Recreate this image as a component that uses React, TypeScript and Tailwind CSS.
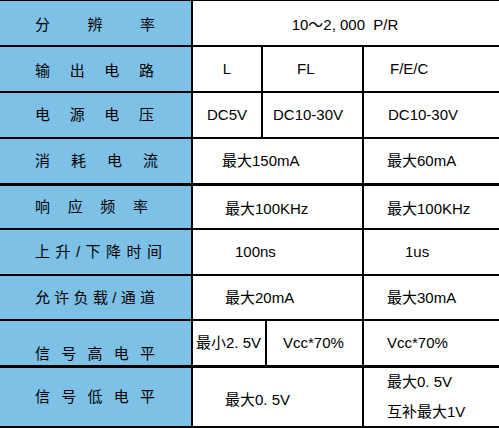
const font = { fontFamily: '"Liberation Sans", "Noto Sans CJK SC", sans-serif' };

const Label = ({ text, width }: { text: string; width: number }) => (
  <div className="flex justify-between" style={{ width }}>
    {Array.from(text).map((c, i) => (
      <span key={i}>{c}</span>
    ))}
  </div>
);

const App = () => {
  return (
    <div
      className="w-[499px] h-[428px] bg-white text-black text-[15px] leading-[20px] overflow-hidden"
      style={font}
    >
      <div className="border-t border-black">
        {/* 分辨率 */}
        <div className="flex h-[46px] border-b-2 border-black">
          <div className="w-[193px] shrink-0 bg-[#7dc1e6] border-r-2 border-black flex items-center pl-[35px] pt-[3px]">
            <Label text="分辨率" width={120} />
          </div>
          <div className="flex-1 flex items-center justify-center pt-[4px] pr-[2px] whitespace-pre">10～2, 000  P/R</div>
        </div>

        {/* 输出电路 */}
        <div className="flex h-[46px] border-b-2 border-black">
          <div className="w-[193px] shrink-0 bg-[#7dc1e6] border-r-2 border-black flex items-center pl-[35px] pt-[3px]">
            <Label text="输出电路" width={119} />
          </div>
          <div className="w-[70px] shrink-0 border-r-2 border-black flex items-center justify-center">L</div>
          <div className="w-[101px] shrink-0 border-r-2 border-black flex items-center pl-[34px]">FL</div>
          <div className="flex-1 flex items-center pl-[26px]">F/E/C</div>
        </div>

        {/* 电源电压 */}
        <div className="flex h-[46px] border-b-2 border-black">
          <div className="w-[193px] shrink-0 bg-[#7dc1e6] border-r-2 border-black flex items-center pl-[35px]">
            <Label text="电源电压" width={119} />
          </div>
          <div className="w-[70px] shrink-0 border-r-2 border-black flex items-center justify-center">DC5V</div>
          <div className="w-[101px] shrink-0 border-r-2 border-black flex items-center pl-[10px]">DC10-30V</div>
          <div className="flex-1 flex items-center pl-[24px]">DC10-30V</div>
        </div>

        {/* 消耗电流 */}
        <div className="flex h-[47px] border-b-[3px] border-black">
          <div className="w-[193px] shrink-0 bg-[#7dc1e6] border-r-2 border-black flex items-center pl-[35px]">
            <Label text="消耗电流" width={123} />
          </div>
          <div className="w-[171px] shrink-0 border-r-2 border-black flex items-center pl-[29px]">最大150mA</div>
          <div className="flex-1 flex items-center pl-[23px]">最大60mA</div>
        </div>

        {/* 响应频率 */}
        <div className="flex h-[44px] border-b-2 border-black">
          <div className="w-[193px] shrink-0 bg-[#7dc1e6] border-r-2 border-black flex items-center pl-[35px]">
            <Label text="响应频率" width={113} />
          </div>
          <div className="w-[171px] shrink-0 border-r-2 border-black flex items-center pl-[32px] pt-[3px]">最大100KHz</div>
          <div className="flex-1 flex items-center pl-[23px] pt-[3px]">最大100KHz</div>
        </div>

        {/* 上升/下降时间 */}
        <div className="flex h-[46px] border-b-2 border-black">
          <div className="w-[193px] shrink-0 bg-[#7dc1e6] border-r-2 border-black flex items-center pl-[35px]">
            <Label text="上升/下降时间" width={127} />
          </div>
          <div className="w-[171px] shrink-0 border-r-2 border-black flex items-center pl-[42px]">100ns</div>
          <div className="flex-1 flex items-center pl-[41px]">1us</div>
        </div>

        {/* 允许负载/通道 */}
        <div className="flex h-[45px] border-b-2 border-black">
          <div className="w-[193px] shrink-0 bg-[#7dc1e6] border-r-2 border-black flex items-center pl-[35px]">
            <Label text="允许负载/通道" width={120} />
          </div>
          <div className="w-[171px] shrink-0 border-r-2 border-black flex items-center pl-[32px]">最大20mA</div>
          <div className="flex-1 flex items-center pl-[23px]">最大30mA</div>
        </div>

        {/* 信号高电平 */}
        <div className="flex h-[47px] border-b-[3px] border-black">
          <div className="w-[193px] shrink-0 bg-[#7dc1e6] border-r-2 border-black flex items-end pl-[35px] leading-[22px]">
            <Label text="信号高电平" width={120} />
          </div>
          <div className="w-[74px] shrink-0 border-r-2 border-black flex items-center pl-[3px]">最小2. 5V</div>
          <div className="w-[97px] shrink-0 border-r-2 border-black flex items-center pl-[16px]">Vcc*70%</div>
          <div className="flex-1 flex items-center pl-[23px]">Vcc*70%</div>
        </div>

        {/* 信号低电平 */}
        <div className="flex h-[60px] border-b-2 border-black">
          <div className="w-[193px] shrink-0 bg-[#7dc1e6] border-r-2 border-black flex items-center pl-[35px]">
            <Label text="信号低电平" width={120} />
          </div>
          <div className="w-[171px] shrink-0 border-r-2 border-black flex items-center pl-[32px] pt-[6px]">最大0. 5V</div>
          <div className="flex-1 flex flex-col justify-center gap-[10px] pl-[23px]">
            <div>最大0. 5V</div>
            <div>互补最大1V</div>
          </div>
        </div>
      </div>
    </div>
  );
};

export default App;
